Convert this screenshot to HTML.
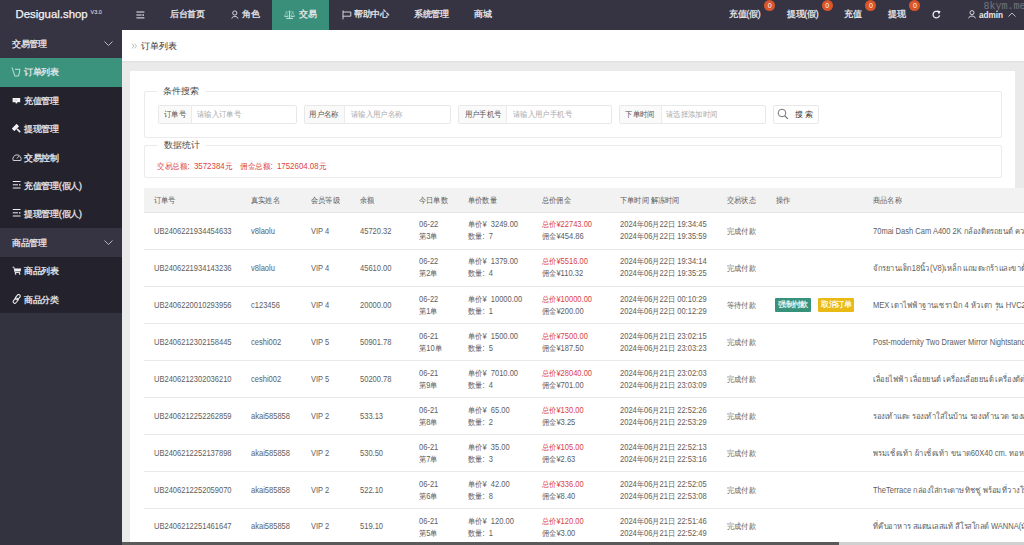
<!DOCTYPE html>
<html><head><meta charset="utf-8">
<style>
*{margin:0;padding:0;box-sizing:border-box}
html,body{width:1024px;height:545px;overflow:hidden;background:#eaeaea;font-family:"Liberation Sans",sans-serif;position:relative}
.a{position:absolute;white-space:nowrap}
#hdr{position:absolute;left:0;top:0;width:1024px;height:29.6px;background:#363442}
.hn{-webkit-text-stroke:0.3px #e8e8ec;color:#e8e8ec;font-size:9px;line-height:12px;top:8.2px;transform:scale(0.96);transform-origin:0 50%}
.badge{position:absolute;width:11px;height:11px;border-radius:50%;background:#d9552b;color:#fff;font-size:7px;line-height:11px;text-align:center;top:0}
#side{position:absolute;left:0;top:29.6px;width:122px;height:516px;background:#33323f}
.grp{position:absolute;left:0;width:122px;height:28.4px;background:#363442}
.sub{position:absolute;left:0;width:122px;background:#24232d}
.sn{-webkit-text-stroke:0.3px #e6e6ea;color:#e6e6ea;font-size:9px;line-height:12px;transform:scale(0.965);transform-origin:0 50%}
#crumb{position:absolute;left:122px;top:29.6px;width:902px;height:31.4px;background:#fff}
#band{position:absolute;left:122px;top:61px;width:902px;height:2px;background:#e4e4e4}
#panel{position:absolute;left:130.3px;top:70.6px;width:884.7px;height:480px;background:#fff}
.fs{position:absolute;left:144.3px;width:858.2px;border:1px solid #ebebeb;border-radius:2px}
.lg{position:absolute;background:#fff;color:#4a4a4a;font-size:9px;line-height:12px;padding:0 6px}
.ig{position:absolute;top:104.9px;height:19.6px;border:1px solid #e8e8e8;border-radius:2px;background:#fff}
.il{position:absolute;left:0;top:0;height:17.6px;background:#fafafa;border-right:1px solid #ebebeb;color:#555;font-size:8px;line-height:17.6px;text-align:center;white-space:nowrap}
.il span,.ip{display:inline-block;transform:scaleX(0.92);transform-origin:50% 50%}
.ip{position:absolute;top:0;color:#aaa;font-size:8px;line-height:17.6px;transform-origin:0 50%!important;white-space:nowrap}
.red,.td.red{color:#dc3f3f}
.thead{position:absolute;left:144.4px;top:187.7px;width:880px;height:25.3px;background:#f2f2f2;border-bottom:1px solid #e6e6e6}
.rline{position:absolute;left:144.4px;width:880px;height:1px;background:#e8e8e8}
.td{color:#5e5e5e;font-size:8.4px;line-height:12px;transform:scaleX(0.9);transform-origin:0 50%}
.btn{height:13.7px;width:36.9px;color:#fff;font-size:8px;line-height:13.7px;text-align:center;border-radius:1px;-webkit-text-stroke:0.2px #fff;letter-spacing:-0.6px}
.g{background:#36927a}
.y{background:#e9b915;width:35.8px}
#sbar{position:absolute;left:122px;top:542px;width:902px;height:3px;background:#d0d0d0}
#sthumb{position:absolute;left:122px;top:542px;width:717px;height:3px;background:#5a5a5a}
</style></head><body>
<div id="hdr"></div>
<div class="a" style="left:15.5px;top:6.5px;color:#f2f2f4;font-size:11.4px;line-height:14px;-webkit-text-stroke:0.25px #f2f2f4">Desigual.shop</div>
<div class="a" style="left:90.5px;top:8.5px;color:#f2f2f4;font-size:5.5px;line-height:6px">V3.0</div>
<svg class="a" style="left:135.5px;top:10.5px" width="9" height="8" viewBox="0 0 9 8"><path d="M0.4 1 H8.4 M0.4 4 H5.6 M0.4 6.9 H8.4" stroke="#ededf2" stroke-width="1"/><rect x="6.4" y="3.4" width="1.6" height="1.3" fill="#ededf2"/></svg>
<div class="a hn" style="left:169.8px">后台首页</div>
<svg class="a" style="left:230.5px;top:9.5px" width="8" height="9" viewBox="0 0 8 9"><circle cx="3.8" cy="3" r="2.1" fill="none" stroke="#e4e4ea" stroke-width="0.9"/><path d="M0.8 8.6 C1 5.8 6.8 5.8 7 8.6" fill="none" stroke="#e4e4ea" stroke-width="0.9"/></svg>
<div class="a hn" style="left:241.5px">角色</div>
<div class="a" style="left:271.7px;top:0;width:57.4px;height:29.6px;background:#3a8f7b"></div>
<svg class="a" style="left:284px;top:10px" width="11" height="9" viewBox="0 0 11 9"><path d="M5.6 0.6 V8 M2.2 8.4 H9" fill="none" stroke="#d8f0e8" stroke-width="0.9"/><path d="M0.4 6.3 H4.4 M6.8 6.3 H10.6" stroke="#d8f0e8" stroke-width="0.9"/><path d="M2.4 2 L0.6 6 M2.4 2 L4.2 6 M8.7 2 L6.9 6 M8.7 2 L10.5 6 M1.5 1.8 H9.7" fill="none" stroke="#b0d8ca" stroke-width="0.5"/></svg>
<div class="a hn" style="left:299px">交易</div>
<svg class="a" style="left:341.5px;top:9.5px" width="10" height="10" viewBox="0 0 10 10"><path d="M1 0.5 V9.4" stroke="#e4e4ea" stroke-width="0.9"/><path d="M1 2 H8.8 V6.2 H1" fill="none" stroke="#e4e4ea" stroke-width="0.9"/></svg>
<div class="a hn" style="left:354px">帮助中心</div>
<div class="a hn" style="left:414px">系统管理</div>
<div class="a hn" style="left:474px">商城</div>

<div class="a hn" style="left:729.4px">充值(假)</div>
<div class="badge" style="left:764.3px">0</div>
<div class="a hn" style="left:786.8px">提现(假)</div>
<div class="badge" style="left:821.8px">0</div>
<div class="a hn" style="left:844px">充值</div>
<div class="badge" style="left:865.4px">0</div>
<div class="a hn" style="left:888.2px">提现</div>
<div class="badge" style="left:909.4px">0</div>
<svg class="a" style="left:931.5px;top:10px" width="9" height="9" viewBox="0 0 9 9"><path d="M7.6 5.4 A3.3 3.3 0 1 1 6.1 1.8" fill="none" stroke="#ececf0" stroke-width="1.3"/><path d="M4.9 0.3 L8.6 1.2 L6.9 4.6 Z" fill="#ececf0"/></svg>
<svg class="a" style="left:967.5px;top:10px" width="8" height="8.5" viewBox="0 0 8 8.5"><circle cx="4" cy="2.6" r="2" fill="none" stroke="#e8e8ec" stroke-width="0.9"/><path d="M0.6 8.3 C1 5.3 7 5.3 7.4 8.3" fill="none" stroke="#e8e8ec" stroke-width="0.9"/></svg>
<div class="a hn" style="left:979px;font-weight:bold;font-size:8.2px;top:9.8px;-webkit-text-stroke:0;transform:none">admin</div>
<svg class="a" style="left:1008px;top:11.5px" width="8" height="5" viewBox="0 0 8 5"><path d="M0.5 4.5 L4 1 L7.5 4.5" fill="none" stroke="#cfcfd6" stroke-width="0.9"/></svg>
<div class="a" style="left:983.5px;top:0.6px;color:#74747e;font-family:'Liberation Mono',monospace;font-size:10px;line-height:12px">8kym.me</div>

<div id="side">
</div>
<div class="grp" style="top:29.6px"></div>
<div class="a sn" style="left:12.2px;top:38px">交易管理</div>
<svg class="a" style="left:104px;top:41px" width="9" height="5" viewBox="0 0 9 5"><path d="M0.5 0.5 L4.5 4.5 L8.5 0.5" fill="none" stroke="#c8c8d0" stroke-width="0.9"/></svg>
<div class="sub" style="top:58px;height:170.4px"></div>
<div class="a" style="left:0;top:58px;width:122px;height:28.6px;background:#3b937d"></div>
<svg class="a" style="left:11px;top:66px" width="10" height="11" viewBox="0 0 10 11"><path d="M1 1.5 L4 10.5 M4 3.3 H9 L7.6 10 H4.3" fill="none" stroke="#bfe6da" stroke-width="1"/></svg>
<div class="a sn" style="left:23.7px;top:66.4px">订单列表</div>
<svg class="a" style="left:12px;top:96.5px" width="9" height="7" viewBox="0 0 9 7"><rect x="0.6" y="1" width="7.6" height="4.2" fill="#f2f2f4"/><rect x="3.6" y="5" width="1.6" height="1.4" fill="#f2f2f4"/><path d="M2.5 3 H5" stroke="#a0a0a8" stroke-width="0.6"/></svg>
<div class="a sn" style="left:23.7px;top:94.8px">充值管理</div>
<svg class="a" style="left:11.5px;top:124px" width="10" height="10" viewBox="0 0 10 10"><g transform="rotate(-45 5 5)"><rect x="1.6" y="1" width="6.8" height="3.6" rx="0.6" fill="#f2f2f4"/><rect x="4.2" y="4.6" width="1.6" height="5" rx="0.8" fill="#f2f2f4"/></g></svg>
<div class="a sn" style="left:23.7px;top:123.2px">提现管理</div>
<svg class="a" style="left:11.5px;top:152px" width="10" height="10" viewBox="0 0 10 10"><path d="M1.2 8.5 A4.1 4.1 0 1 1 8.8 8.5 Z" fill="none" stroke="#dcdce2" stroke-width="0.9"/><path d="M5 6.5 L7 4" stroke="#dcdce2" stroke-width="0.9"/></svg>
<div class="a sn" style="left:23.7px;top:151.6px">交易控制</div>
<svg class="a" style="left:11.5px;top:180px" width="10" height="10" viewBox="0 0 10 10"><path d="M0.8 1.5 H8.5 M0.8 4.8 H6 M0.8 8 H8.5" stroke="#eeeef2" stroke-width="1"/><rect x="7" y="4.2" width="1.4" height="1.3" fill="#eeeef2"/></svg>
<div class="a sn" style="left:23.7px;top:180px">充值管理(假人)</div>
<svg class="a" style="left:11.5px;top:208.4px" width="10" height="10" viewBox="0 0 10 10"><path d="M0.8 1.5 H8.5 M0.8 4.8 H6 M0.8 8 H8.5" stroke="#eeeef2" stroke-width="1"/><rect x="7" y="4.2" width="1.4" height="1.3" fill="#eeeef2"/></svg>
<div class="a sn" style="left:23.7px;top:208.4px">提现管理(假人)</div>
<div class="grp" style="top:228.4px"></div>
<div class="a sn" style="left:12.2px;top:236.8px">商品管理</div>
<svg class="a" style="left:104px;top:239.8px" width="9" height="5" viewBox="0 0 9 5"><path d="M0.5 0.5 L4.5 4.5 L8.5 0.5" fill="none" stroke="#c8c8d0" stroke-width="0.9"/></svg>
<div class="sub" style="top:256.8px;height:56.2px"></div>
<svg class="a" style="left:11.5px;top:265.5px" width="10" height="9" viewBox="0 0 10 9"><path d="M0.6 1.2 H2 L3 6.5 H8" fill="none" stroke="#f2f2f4" stroke-width="0.9"/><path d="M2.4 2.4 H9.2 L8.6 5.6 H3 Z" fill="#f2f2f4"/><circle cx="3.6" cy="7.9" r="0.8" fill="#f2f2f4"/><circle cx="7.6" cy="7.9" r="0.8" fill="#f2f2f4"/></svg>
<div class="a sn" style="left:23.7px;top:265.2px">商品列表</div>
<svg class="a" style="left:11.5px;top:293.5px" width="10" height="10" viewBox="0 0 10 10"><g fill="none" stroke="#eeeef2" stroke-width="1"><rect x="4.2" y="0.2" width="3.2" height="5.8" rx="1.6" transform="rotate(40 5.8 3.1)"/><rect x="2" y="3.8" width="3.2" height="5.8" rx="1.6" transform="rotate(40 3.6 6.7)"/></g></svg>
<div class="a sn" style="left:23.7px;top:293.6px">商品分类</div>

<div id="crumb"></div>
<svg class="a" style="left:131px;top:42.5px" width="7" height="6" viewBox="0 0 7 6"><path d="M0.8 0.6 L3 3 L0.8 5.4 M3.4 0.6 L5.6 3 L3.4 5.4" fill="none" stroke="#b4b4b4" stroke-width="0.9"/></svg>
<div class="a" style="left:141px;top:40px;color:#333;font-size:9px;line-height:12px">订单列表</div>
<div id="band"></div>
<div id="panel"></div>

<div class="fs" style="top:91.2px;height:46.4px"></div>
<div class="lg" style="left:157.3px;top:84.8px">条件搜索</div>
<div class="ig" style="left:157.5px;width:139px"><div class="il" style="width:33.2px"><span>订单号</span></div><div class="ip" style="left:38.5px">请输入订单号</div></div>
<div class="ig" style="left:303.5px;width:147px"><div class="il" style="width:40.8px"><span>用户名称</span></div><div class="ip" style="left:46.5px">请输入用户名称</div></div>
<div class="ig" style="left:457.6px;width:154.3px"><div class="il" style="width:48.9px"><span>用户手机号</span></div><div class="ip" style="left:54px">请输入用户手机号</div></div>
<div class="ig" style="left:618.9px;width:147.3px"><div class="il" style="width:41.8px"><span>下单时间</span></div><div class="ip" style="left:46.5px">请选择添加时间</div></div>
<div class="ig" style="left:772.8px;width:46.1px"></div>
<svg class="a" style="left:777px;top:108px" width="12" height="12" viewBox="0 0 12 12"><circle cx="5" cy="5" r="3.8" fill="none" stroke="#666" stroke-width="0.9"/><path d="M7.8 7.8 L10.8 10.8" stroke="#666" stroke-width="1.1"/></svg>
<div class="a" style="left:794.5px;top:108.8px;color:#333;font-size:7.5px;line-height:12px;letter-spacing:2px">搜索</div>

<div class="fs" style="top:145.3px;height:32.6px"></div>
<div class="lg" style="left:157.5px;top:139px">数据统计</div>
<div class="a red" style="left:157px;top:159.6px;font-size:8.3px;line-height:12px;transform:scaleX(0.95);transform-origin:0 50%">交易总额:&nbsp; 3572384元</div>
<div class="a red" style="left:239.5px;top:159.6px;font-size:8.3px;line-height:12px;transform:scaleX(0.95);transform-origin:0 50%">佣金总额:&nbsp; 1752604.08元</div>

<div class="a" style="left:144.4px;top:213px;width:880px;height:332px;background:#fff"></div>
<div class="thead"></div>
<div class="a td" style="left:153.6px;top:193.6px">订单号</div>
<div class="a td" style="left:250.9px;top:193.6px">真实姓名</div>
<div class="a td" style="left:311.3px;top:193.6px">会员等级</div>
<div class="a td" style="left:360.3px;top:193.6px">余额</div>
<div class="a td" style="left:418.8px;top:193.6px">今日单数</div>
<div class="a td" style="left:468.1px;top:193.6px">单价数量</div>
<div class="a td" style="left:541.6px;top:193.6px">总价佣金</div>
<div class="a td" style="left:620.3px;top:193.6px">下单时间 解冻时间</div>
<div class="a td" style="left:726.6px;top:193.6px">交易状态</div>
<div class="a td" style="left:775.6px;top:193.6px">操作</div>
<div class="a td" style="left:873.4px;top:193.6px">商品名称</div>
<div class="rline" style="top:249.4px"></div>
<div class="a td" style="left:153.6px;top:225.2px">UB2406221934454633</div>
<div class="a td" style="left:250.9px;top:225.2px">v8laolu</div>
<div class="a td" style="left:311.3px;top:225.2px">VIP 4</div>
<div class="a td" style="left:360.3px;top:225.2px">45720.32</div>
<div class="a td" style="left:418.8px;top:218.0px">06-22</div>
<div class="a td" style="left:418.8px;top:230.0px">第3单</div>
<div class="a td" style="left:468.1px;top:218.0px">单价¥&nbsp; 3249.00</div>
<div class="a td" style="left:468.1px;top:230.0px">数量:&nbsp; 7</div>
<div class="a td red" style="left:541.6px;top:218.0px">总价¥22743.00</div>
<div class="a td" style="left:541.6px;top:230.0px">佣金¥454.86</div>
<div class="a td" style="left:620.3px;top:218.0px">2024年06月22日 19:34:45</div>
<div class="a td" style="left:620.3px;top:230.0px">2024年06月22日 19:35:59</div>
<div class="a td" style="left:726.6px;top:225.2px">完成付款</div>
<div class="a td" style="left:873.4px;top:225.2px">70mai Dash Cam A400 2K กล้องติดรถยนต์ ความละเอียด</div>
<div class="rline" style="top:286.3px"></div>
<div class="a td" style="left:153.6px;top:262.2px">UB2406221934143236</div>
<div class="a td" style="left:250.9px;top:262.2px">v8laolu</div>
<div class="a td" style="left:311.3px;top:262.2px">VIP 4</div>
<div class="a td" style="left:360.3px;top:262.2px">45610.00</div>
<div class="a td" style="left:418.8px;top:255.0px">06-22</div>
<div class="a td" style="left:418.8px;top:267.0px">第2单</div>
<div class="a td" style="left:468.1px;top:255.0px">单价¥&nbsp; 1379.00</div>
<div class="a td" style="left:468.1px;top:267.0px">数量:&nbsp; 4</div>
<div class="a td red" style="left:541.6px;top:255.0px">总价¥5516.00</div>
<div class="a td" style="left:541.6px;top:267.0px">佣金¥110.32</div>
<div class="a td" style="left:620.3px;top:255.0px">2024年06月22日 19:34:14</div>
<div class="a td" style="left:620.3px;top:267.0px">2024年06月22日 19:35:25</div>
<div class="a td" style="left:726.6px;top:262.2px">完成付款</div>
<div class="a td" style="left:873.4px;top:262.2px">จักรยานเด็ก18นิ้ว(V8)เหล็ก แถมตะกร้าและขาตั้ง แ</div>
<div class="rline" style="top:323.2px"></div>
<div class="a td" style="left:153.6px;top:299.1px">UB2406220010293956</div>
<div class="a td" style="left:250.9px;top:299.1px">c123456</div>
<div class="a td" style="left:311.3px;top:299.1px">VIP 4</div>
<div class="a td" style="left:360.3px;top:299.1px">20000.00</div>
<div class="a td" style="left:418.8px;top:293.1px">06-22</div>
<div class="a td" style="left:418.8px;top:305.1px">第1单</div>
<div class="a td" style="left:468.1px;top:293.1px">单价¥&nbsp; 10000.00</div>
<div class="a td" style="left:468.1px;top:305.1px">数量:&nbsp; 1</div>
<div class="a td red" style="left:541.6px;top:293.1px">总价¥10000.00</div>
<div class="a td" style="left:541.6px;top:305.1px">佣金¥200.00</div>
<div class="a td" style="left:620.3px;top:293.1px">2024年06月22日 00:10:29</div>
<div class="a td" style="left:620.3px;top:305.1px">2024年06月22日 00:12:29</div>
<div class="a td" style="left:726.6px;top:299.1px">等待付款</div>
<div class="a btn g" style="left:774.6px;top:298.4px">强制付款</div>
<div class="a btn y" style="left:818.4px;top:298.4px">取消订单</div>
<div class="a td" style="left:873.4px;top:299.1px">MEX เตาไฟฟ้าฐานเซรามิก 4 หัวเตา รุ่น HVC264</div>
<div class="rline" style="top:360.1px"></div>
<div class="a td" style="left:153.6px;top:335.9px">UB2406212302158445</div>
<div class="a td" style="left:250.9px;top:335.9px">ceshi002</div>
<div class="a td" style="left:311.3px;top:335.9px">VIP 5</div>
<div class="a td" style="left:360.3px;top:335.9px">50901.78</div>
<div class="a td" style="left:418.8px;top:329.9px">06-21</div>
<div class="a td" style="left:418.8px;top:341.9px">第10单</div>
<div class="a td" style="left:468.1px;top:329.9px">单价¥&nbsp; 1500.00</div>
<div class="a td" style="left:468.1px;top:341.9px">数量:&nbsp; 5</div>
<div class="a td red" style="left:541.6px;top:329.9px">总价¥7500.00</div>
<div class="a td" style="left:541.6px;top:341.9px">佣金¥187.50</div>
<div class="a td" style="left:620.3px;top:329.9px">2024年06月21日 23:02:15</div>
<div class="a td" style="left:620.3px;top:341.9px">2024年06月21日 23:03:23</div>
<div class="a td" style="left:726.6px;top:335.9px">完成付款</div>
<div class="a td" style="left:873.4px;top:335.9px">Post-modernity Two Drawer Mirror Nightstand</div>
<div class="rline" style="top:397.0px"></div>
<div class="a td" style="left:153.6px;top:372.9px">UB2406212302036210</div>
<div class="a td" style="left:250.9px;top:372.9px">ceshi002</div>
<div class="a td" style="left:311.3px;top:372.9px">VIP 5</div>
<div class="a td" style="left:360.3px;top:372.9px">50200.78</div>
<div class="a td" style="left:418.8px;top:366.8px">06-21</div>
<div class="a td" style="left:418.8px;top:378.8px">第9单</div>
<div class="a td" style="left:468.1px;top:366.8px">单价¥&nbsp; 7010.00</div>
<div class="a td" style="left:468.1px;top:378.8px">数量:&nbsp; 4</div>
<div class="a td red" style="left:541.6px;top:366.8px">总价¥28040.00</div>
<div class="a td" style="left:541.6px;top:378.8px">佣金¥701.00</div>
<div class="a td" style="left:620.3px;top:366.8px">2024年06月21日 23:02:03</div>
<div class="a td" style="left:620.3px;top:378.8px">2024年06月21日 23:03:09</div>
<div class="a td" style="left:726.6px;top:372.9px">完成付款</div>
<div class="a td" style="left:873.4px;top:372.9px">เลื่อยไฟฟ้า เลื่อยยนต์ เครื่องเลื่อยยนต์ เครื่องตัดไม้</div>
<div class="rline" style="top:433.9px"></div>
<div class="a td" style="left:153.6px;top:409.8px">UB2406212252262859</div>
<div class="a td" style="left:250.9px;top:409.8px">akai585858</div>
<div class="a td" style="left:311.3px;top:409.8px">VIP 2</div>
<div class="a td" style="left:360.3px;top:409.8px">533.13</div>
<div class="a td" style="left:418.8px;top:403.9px">06-21</div>
<div class="a td" style="left:418.8px;top:415.9px">第8单</div>
<div class="a td" style="left:468.1px;top:403.9px">单价¥&nbsp; 65.00</div>
<div class="a td" style="left:468.1px;top:415.9px">数量:&nbsp; 2</div>
<div class="a td red" style="left:541.6px;top:403.9px">总价¥130.00</div>
<div class="a td" style="left:541.6px;top:415.9px">佣金¥3.25</div>
<div class="a td" style="left:620.3px;top:403.9px">2024年06月21日 22:52:26</div>
<div class="a td" style="left:620.3px;top:415.9px">2024年06月21日 22:53:29</div>
<div class="a td" style="left:726.6px;top:409.8px">完成付款</div>
<div class="a td" style="left:873.4px;top:409.8px">รองเท้าแตะ รองเท้าใส่ในบ้าน รองเท้านวด รองเท้า</div>
<div class="rline" style="top:470.8px"></div>
<div class="a td" style="left:153.6px;top:446.6px">UB2406212252137898</div>
<div class="a td" style="left:250.9px;top:446.6px">akai585858</div>
<div class="a td" style="left:311.3px;top:446.6px">VIP 2</div>
<div class="a td" style="left:360.3px;top:446.6px">530.50</div>
<div class="a td" style="left:418.8px;top:440.8px">06-21</div>
<div class="a td" style="left:418.8px;top:452.8px">第7单</div>
<div class="a td" style="left:468.1px;top:440.8px">单价¥&nbsp; 35.00</div>
<div class="a td" style="left:468.1px;top:452.8px">数量:&nbsp; 3</div>
<div class="a td red" style="left:541.6px;top:440.8px">总价¥105.00</div>
<div class="a td" style="left:541.6px;top:452.8px">佣金¥2.63</div>
<div class="a td" style="left:620.3px;top:440.8px">2024年06月21日 22:52:13</div>
<div class="a td" style="left:620.3px;top:452.8px">2024年06月21日 22:53:16</div>
<div class="a td" style="left:726.6px;top:446.6px">完成付款</div>
<div class="a td" style="left:873.4px;top:446.6px">พรมเช็ดเท้า ผ้าเช็ดเท้า ขนาด60X40 cm. ทอหนา</div>
<div class="rline" style="top:507.7px"></div>
<div class="a td" style="left:153.6px;top:483.6px">UB2406212252059070</div>
<div class="a td" style="left:250.9px;top:483.6px">akai585858</div>
<div class="a td" style="left:311.3px;top:483.6px">VIP 2</div>
<div class="a td" style="left:360.3px;top:483.6px">522.10</div>
<div class="a td" style="left:418.8px;top:477.9px">06-21</div>
<div class="a td" style="left:418.8px;top:489.9px">第6单</div>
<div class="a td" style="left:468.1px;top:477.9px">单价¥&nbsp; 42.00</div>
<div class="a td" style="left:468.1px;top:489.9px">数量:&nbsp; 8</div>
<div class="a td red" style="left:541.6px;top:477.9px">总价¥336.00</div>
<div class="a td" style="left:541.6px;top:489.9px">佣金¥8.40</div>
<div class="a td" style="left:620.3px;top:477.9px">2024年06月21日 22:52:05</div>
<div class="a td" style="left:620.3px;top:489.9px">2024年06月21日 22:53:08</div>
<div class="a td" style="left:726.6px;top:483.6px">完成付款</div>
<div class="a td" style="left:873.4px;top:483.6px">TheTerrace กล่องใส่กระดาษทิชชู่ พร้อมที่วางโทร</div>
<div class="rline" style="top:544.6px"></div>
<div class="a td" style="left:153.6px;top:520.4px">UB2406212251461647</div>
<div class="a td" style="left:250.9px;top:520.4px">akai585858</div>
<div class="a td" style="left:311.3px;top:520.4px">VIP 2</div>
<div class="a td" style="left:360.3px;top:520.4px">519.10</div>
<div class="a td" style="left:418.8px;top:514.8px">06-21</div>
<div class="a td" style="left:418.8px;top:526.8px">第5单</div>
<div class="a td" style="left:468.1px;top:514.8px">单价¥&nbsp; 120.00</div>
<div class="a td" style="left:468.1px;top:526.8px">数量:&nbsp; 1</div>
<div class="a td red" style="left:541.6px;top:514.8px">总价¥120.00</div>
<div class="a td" style="left:541.6px;top:526.8px">佣金¥3.00</div>
<div class="a td" style="left:620.3px;top:514.8px">2024年06月21日 22:51:46</div>
<div class="a td" style="left:620.3px;top:526.8px">2024年06月21日 22:52:49</div>
<div class="a td" style="left:726.6px;top:520.4px">完成付款</div>
<div class="a td" style="left:873.4px;top:520.4px">ที่คีบอาหาร สแตนเลสแท้ สีโรสโกลด์ WANNA(มีไม้</div>

<div id="sbar"></div>
<div id="sthumb"></div>
</body></html>
